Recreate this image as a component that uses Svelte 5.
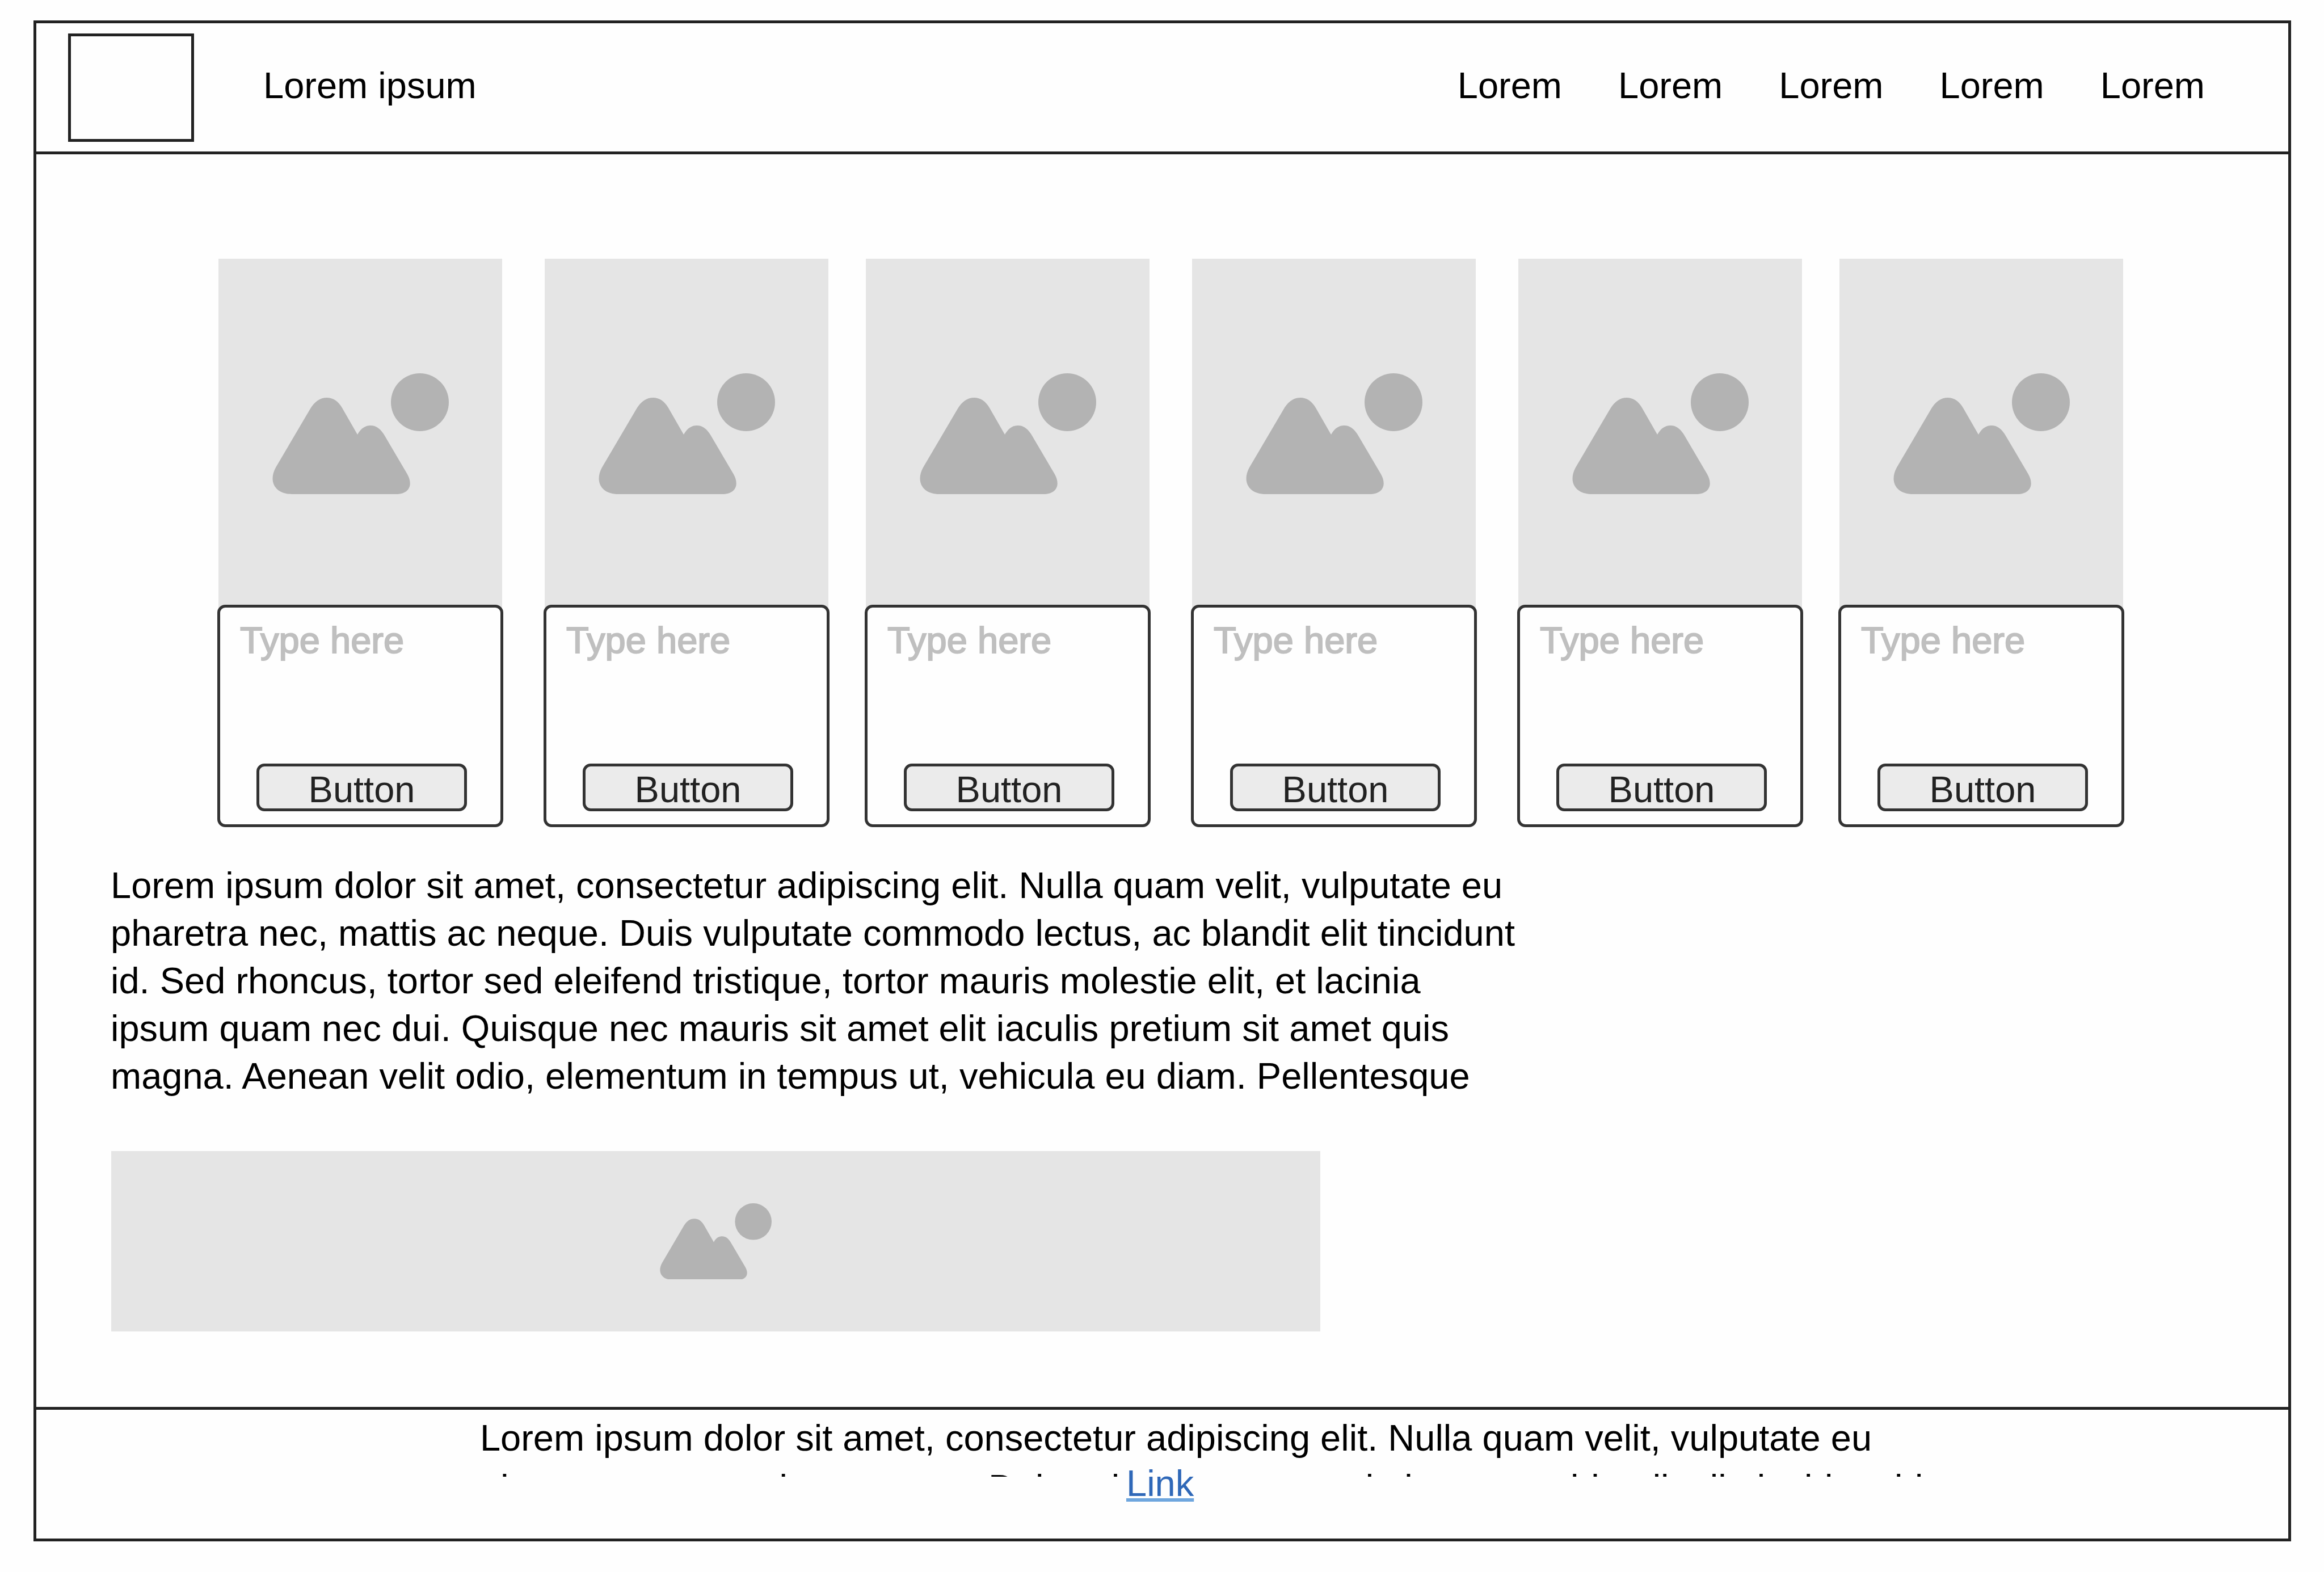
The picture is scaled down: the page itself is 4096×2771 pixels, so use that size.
<script>
  const links = ['Lorem', 'Lorem', 'Lorem', 'Lorem', 'Lorem'];
  const cards = [1, 2, 3, 4, 5, 6];
</script>

{#snippet picture()}
  <svg class="picture" viewBox="0 0 311 213" aria-hidden="true">
    <path
      d="M96 43C107 43 116 49 123 61L150 108C156 97 164 92 173 92C183 92 191 98 198 110L238 178C249 198 240 213 218 213H35C6 213 -8 192 6 166L66 64C74 50 84 43 96 43Z"
    />
    <circle cx="260" cy="51" r="51" />
  </svg>
{/snippet}

<div class="page">
  <div class="frame">
    <header>
      <div class="logo"></div>
      <span class="brand">Lorem ipsum</span>
      <nav>
        {#each links as link}
          <a href="#top">{link}</a>
        {/each}
      </nav>
    </header>

    <main>
      <section class="cards">
        {#each cards as card}
          <article class="card">
            <div class="thumb">{@render picture()}</div>
            <div class="panel">
              <textarea placeholder="Type here" aria-label="Card {card} text"></textarea>
              <button type="button">Button</button>
            </div>
          </article>
        {/each}
      </section>

      <p class="intro">
        Lorem ipsum dolor sit amet, consectetur adipiscing elit. Nulla quam velit, vulputate eu
        pharetra nec, mattis ac neque. Duis vulputate commodo lectus, ac blandit elit tincidunt id.
        Sed rhoncus, tortor sed eleifend tristique, tortor mauris molestie elit, et lacinia ipsum
        quam nec dui. Quisque nec mauris sit amet elit iaculis pretium sit amet quis magna. Aenean
        velit odio, elementum in tempus ut, vehicula eu diam. Pellentesque
      </p>

      <div class="banner">{@render picture()}</div>
    </main>

    <footer>
      <p class="note">
        Lorem ipsum dolor sit amet, consectetur adipiscing elit. Nulla quam velit, vulputate eu
        pharetra nec, mattis ac neque. Duis vulputate commodo lectus, ac blandit elit tincidunt id.
      </p>
      <a class="more" href="#more">Link</a>
    </footer>
  </div>
</div>

<style>
  :global(body) {
    background: #fefefe;
  }

  .page {
    box-sizing: border-box;
    padding: 36px 58px 55px 59px;
    font-family: 'Liberation Sans', Arial, sans-serif;
    font-size: 65px;
    line-height: 84px;
    color: #000;
  }

  .frame {
    border: 5px solid #222;
  }

  header {
    display: flex;
    align-items: center;
    padding: 18px 147px 17px 56px;
    border-bottom: 5px solid #222;
  }

  .logo {
    box-sizing: border-box;
    width: 222px;
    height: 191px;
    border: 5px solid #222;
  }

  .brand {
    margin-left: 122px;
    padding-bottom: 8px;
  }

  nav {
    display: flex;
    gap: 99px;
    margin-left: auto;
    padding-bottom: 8px;
  }

  nav a {
    color: inherit;
    text-decoration: none;
  }

  main {
    padding: 184px 0 133px;
  }

  .cards {
    display: grid;
    grid-template-columns: 575fr 566fr 575fr 575fr 566fr 504fr;
    padding: 0 289px 0 319px;
  }

  .card {
    max-width: 504px;
  }

  .thumb,
  .banner {
    display: flex;
    align-items: center;
    justify-content: center;
    background: #e5e5e5;
  }

  .thumb {
    height: 616px;
    margin: 0 2px;
  }

  .picture {
    width: 311px;
    fill: #b3b3b3;
  }

  .panel {
    position: relative;
    display: flex;
    flex-direction: column;
    margin-top: -6px;
    padding: 16px 0 23px;
    border: 5px solid #333;
    border-radius: 14px;
    background: #fefefe;
  }

  textarea {
    box-sizing: border-box;
    width: 100%;
    height: 259px;
    padding: 0 35px;
    border: 0;
    outline: 0;
    resize: none;
    overflow: hidden;
    background: transparent;
    font: inherit;
    color: inherit;
  }

  textarea::placeholder {
    color: #bfbfbf;
    opacity: 1;
    -webkit-text-stroke: 2px #bfbfbf;
  }

  button {
    box-sizing: border-box;
    height: 84px;
    margin: 0 59px 0 64px;
    padding: 8px 0 0;
    border: 5px solid #333;
    border-radius: 14px;
    background: #ebebeb;
    font: inherit;
    line-height: 66px;
    color: #222;
  }

  .intro {
    max-width: 2488px;
    margin: 61px 0 90px 131px;
  }

  .banner {
    width: 53.7%;
    height: 318px;
    margin-left: 132px;
  }

  .banner .picture {
    width: 197px;
  }

  footer {
    padding: 6px 0 55px;
    border-top: 5px solid #222;
  }

  /* The note shows one full line; the next one is cut off at its ascenders. */
  .note {
    max-width: 2620px;
    height: 112px;
    margin: 0 0 0 19.7%;
    overflow: hidden;
    line-height: 88px;
  }

  .more {
    display: block;
    width: max-content;
    margin: -30px 0 0 48.4%;
    color: #2f68b8;
    text-decoration: underline #6ea6de 6px;
    text-underline-offset: 4px;
    text-decoration-skip-ink: none;
  }
</style>
